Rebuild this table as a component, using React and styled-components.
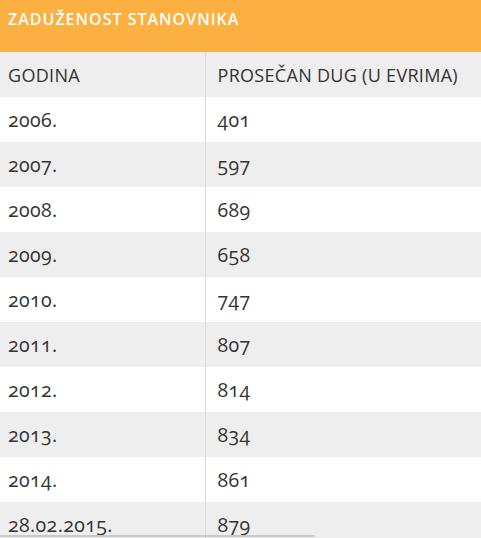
import React from "react";
import styled, { createGlobalStyle } from "styled-components";

const Global = createGlobalStyle`
  html, body { margin: 0; padding: 0; background: #fff; }
  body { font-family: "Open Sans", "DejaVu Sans", sans-serif; overflow: hidden; }
`;

const Wrap = styled.div`
  width: 481px;
`;

const Title = styled.div`
  background: #fbb041;
  color: #fff;
  font-size: 16px;
  font-weight: 600;
  letter-spacing: 1px;
  height: 52px;
  box-sizing: border-box;
  padding: 8px 8px 0;
  line-height: 22px;
`;

const Table = styled.table`
  width: 100%;
  border-collapse: collapse;
  table-layout: fixed;
  color: #333;
`;

const Row = styled.tr`
  background: ${(p) => (p.$shade ? "#eeeeee" : "#ffffff")};
  height: 45px;
`;

const Cell = styled.td`
  padding: 0 0 0 ${(p) => (p.$right ? "12px" : "8px")};
  border-left: ${(p) => (p.$right ? "1px solid #dcdcdc" : "none")};
  vertical-align: middle;
  white-space: nowrap;
  font-weight: 400;
  font-size: ${(p) => (p.$head ? "18px" : "19.5px")};
  letter-spacing: ${(p) => (p.$head ? "0.3px" : "0.4px")};
  font-variant-numeric: oldstyle-nums;
  font-feature-settings: "onum" 1;
`;

const Scroll = styled.div`
  position: fixed;
  left: 0;
  bottom: 1px;
  width: 315px;
  height: 2px;
  background: #c9c9c9;
  border-radius: 1px;
`;

const data = [
  ["2006.", "401"],
  ["2007.", "597"],
  ["2008.", "689"],
  ["2009.", "658"],
  ["2010.", "747"],
  ["2011.", "807"],
  ["2012.", "814"],
  ["2013.", "834"],
  ["2014.", "861"],
  ["28.02.2015.", "879"],
];

export default function App() {
  return (
    <Wrap>
      <Global />
      <Title>ZADUŽENOST STANOVNIKA</Title>
      <Table>
        <colgroup>
          <col style={{ width: "205px" }} />
          <col />
        </colgroup>
        <tbody>
          <Row $shade>
            <Cell $head>GODINA</Cell>
            <Cell $head $right>PROSEČAN DUG (U EVRIMA)</Cell>
          </Row>
          {data.map(([y, v], i) => (
            <Row key={y} $shade={i % 2 === 1}>
              <Cell>{y}</Cell>
              <Cell $right>{v}</Cell>
            </Row>
          ))}
        </tbody>
      </Table>
      <Scroll />
    </Wrap>
  );
}
